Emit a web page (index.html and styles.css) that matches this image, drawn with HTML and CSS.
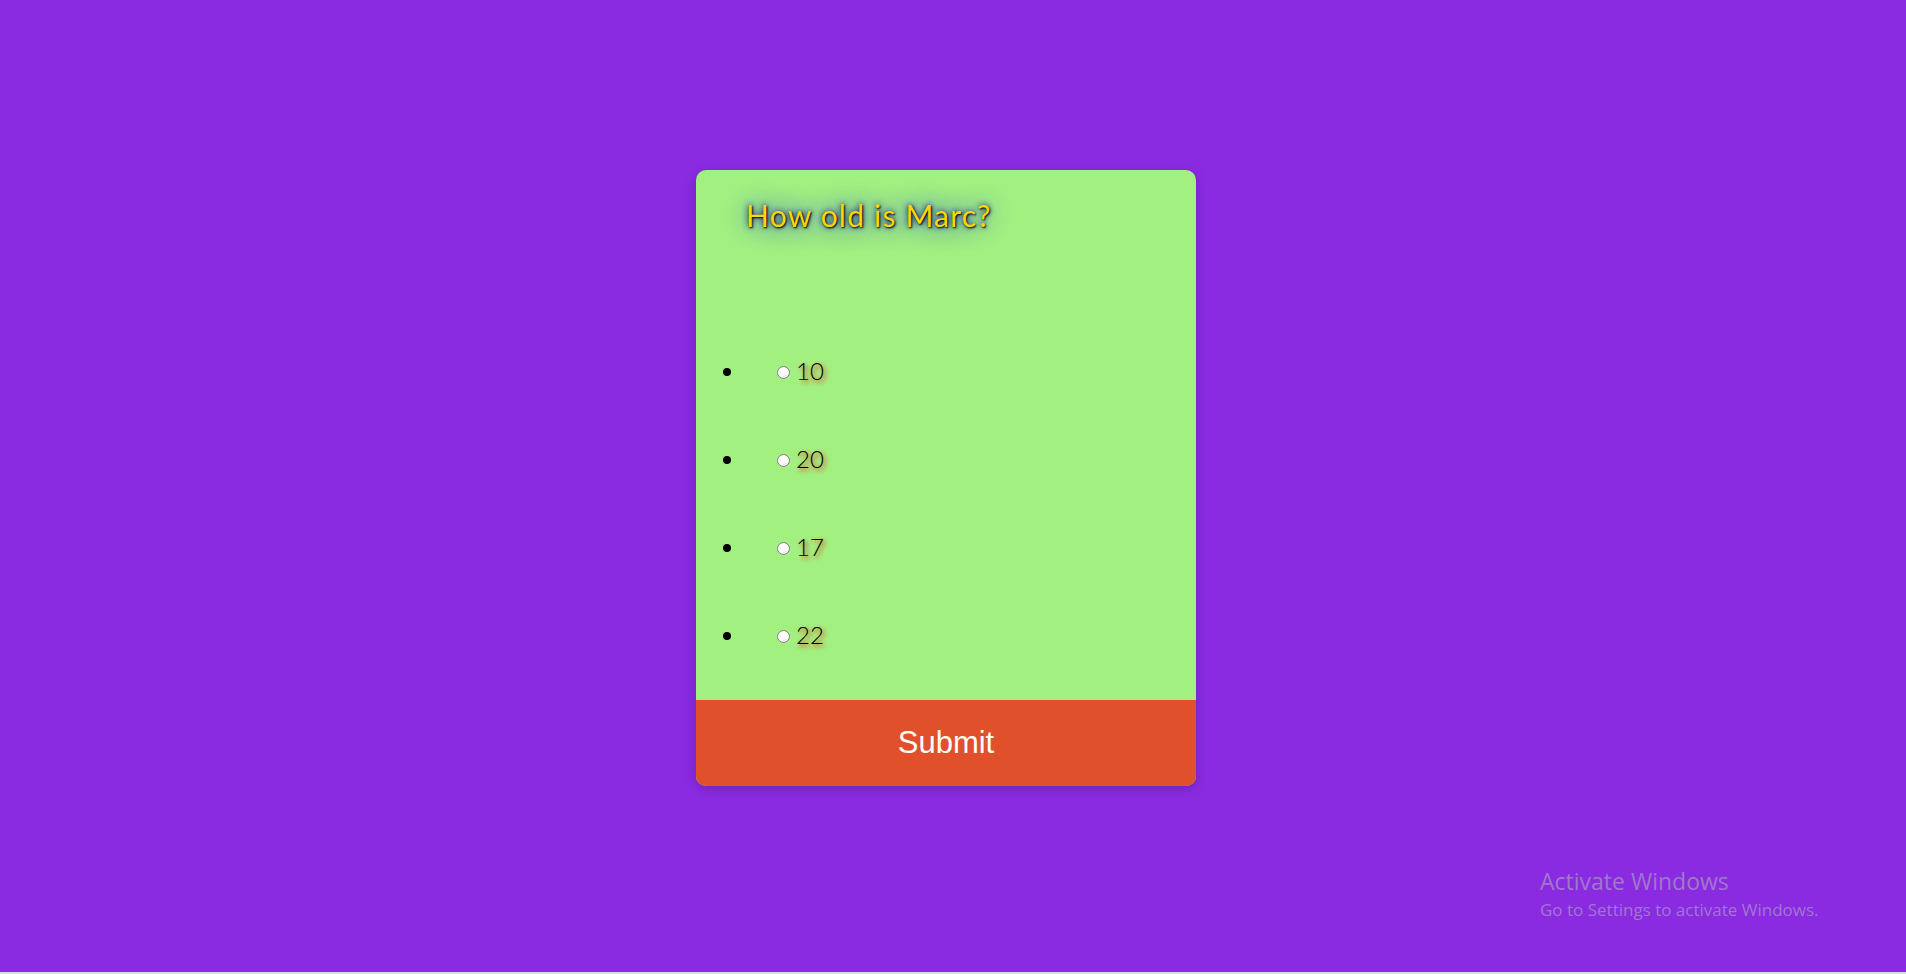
FILE: index.html
```html
<!DOCTYPE html>
<html lang="en">
<head>
<meta charset="utf-8">
<title>Quiz</title>
<link rel="stylesheet" href="styles.css">
</head>
<body>
<main class="stage">
  <div class="card">
    <div class="quiz-body">
      <h2 class="question">How old is Marc?</h2>
      <ul class="answers">
        <li><input type="radio" name="answer" id="a1"><label for="a1">10</label></li>
        <li><input type="radio" name="answer" id="a2"><label for="a2">20</label></li>
        <li><input type="radio" name="answer" id="a3"><label for="a3">17</label></li>
        <li><input type="radio" name="answer" id="a4"><label for="a4">22</label></li>
      </ul>
    </div>
    <button class="submit" type="button">Submit</button>
  </div>
  <div class="watermark">
    <div class="wm-title">Activate Windows</div>
    <div class="wm-sub">Go to Settings to activate Windows.</div>
  </div>
</main>
<div class="bottom-strip"></div>
</body>
</html>
```

FILE: styles.css
```css
html, body {
  margin: 0;
  padding: 0;
}

body {
  background: #8a2be2;
  font-family: "Lato", "Liberation Sans", sans-serif;
  overflow: hidden;
}

.stage {
  position: relative;
  height: 972px;
  box-sizing: border-box;
  padding: 0 14px 16px 0;
  display: flex;
  align-items: center;
  justify-content: center;
  background: #8a2be2;
}

.card {
  width: 500px;
  height: 616px;
  border-radius: 10px;
  overflow: hidden;
  background: #a2f180;
  display: flex;
  flex-direction: column;
  box-shadow: 0 3px 12px rgba(0, 0, 0, 0.2);
}

.quiz-body {
  flex: 1;
  min-height: 0;
}

.question {
  margin: 27px 0 0 0;
  padding-left: 50px;
  font-family: "Lato", "Liberation Sans", sans-serif;
  font-weight: 400;
  font-size: 30px;
  line-height: 36px;
  letter-spacing: 1.2px;
  color: #ffd700;
  text-shadow: 1px 1px 2px black, 0 0 28px blue, 0 0 6px darkblue;
}

.answers {
  margin: 123px 0 0 0;
  padding-left: 50px;
  list-style: disc;
}

.answers li {
  height: 30px;
  line-height: 30px;
  margin-bottom: 58px;
  padding-left: 26px;
  font-size: 24px;
  font-weight: 300;
  color: #000;
}

.answers input {
  width: 13px;
  height: 13px;
  margin: 0 3px 0 5px;
  vertical-align: middle;
  position: relative;
  top: -2px;
}

.answers label {
  padding-left: 3px;
  text-shadow: 2px 2px 5px red;
}

.submit {
  height: 86px;
  flex: none;
  border: none;
  background: #e0502a;
  color: #fff;
  font-family: "Liberation Sans", Arial, sans-serif;
  font-size: 31px;
  cursor: pointer;
  padding: 0;
}

.watermark {
  position: absolute;
  left: 1540px;
  top: 866px;
  color: #9f78cc;
  font-family: "Open Sans", "Noto Sans", sans-serif;
}

.wm-title {
  font-size: 23px;
  line-height: 30px;
}

.wm-sub {
  font-size: 17px;
  line-height: 27px;
}

.bottom-strip {
  height: 2px;
  background: #dcdcdc;
}
```
